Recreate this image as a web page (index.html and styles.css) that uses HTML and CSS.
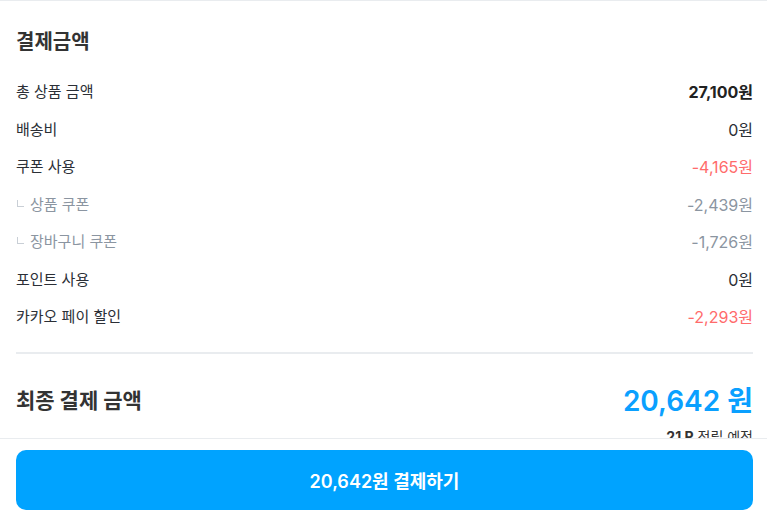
FILE: index.html
```html
<!DOCTYPE html>
<html lang="ko">
<head>
<meta charset="utf-8">
<title>결제금액</title>
<link rel="stylesheet" href="styles.css">
</head>
<body>
<main class="payment">
  <h2 class="payment-title">결제금액</h2>
  <ul class="rows">
    <li class="row"><span>총 상품 금액</span><strong class="amount">27,100원</strong></li>
    <li class="row"><span>배송비</span><span class="amount">0원</span></li>
    <li class="row"><span>쿠폰 사용</span><span class="amount discount">-4,165원</span></li>
    <li class="row sub"><span><i class="branch"></i>상품 쿠폰</span><span class="amount">-2,439원</span></li>
    <li class="row sub"><span><i class="branch"></i>장바구니 쿠폰</span><span class="amount">-1,726원</span></li>
    <li class="row"><span>포인트 사용</span><span class="amount">0원</span></li>
    <li class="row"><span>카카오 페이 할인</span><span class="amount discount">-2,293원</span></li>
  </ul>
  <hr class="divider">
  <div class="total">
    <span class="total-label">최종 결제 금액</span>
    <span class="total-value">20,642 원</span>
  </div>
  <p class="points"><b>21 P</b> 적립 예정</p>
</main>
<footer class="checkout">
  <button class="pay-button" type="button">20,642원 결제하기</button>
</footer>
</body>
</html>
```
FILE: styles.css
```css
* { box-sizing: border-box; }

html, body {
  margin: 0;
  height: 516px;
  overflow: hidden;
  background: #fff;
}

body {
  font-family: Inter, "Noto Sans CJK KR", sans-serif;
  color: #333d4b;
}

.payment {
  border-top: 1px solid #e9ecef;
  padding: 27px 14px 0 16px;
}

.payment-title {
  margin: 0;
  font-size: 20px;
  line-height: 28px;
  font-weight: 700;
  color: #333;
}

.rows {
  list-style: none;
  margin: 25px 0 0;
  padding: 0;
  display: flex;
  flex-direction: column;
  gap: 15.5px;
}

.row {
  display: flex;
  justify-content: space-between;
  align-items: center;
  font-size: 15px;
  line-height: 22px;
  color: #2b2f36;
}

.amount { font-size: 16px; }

.row strong { font-weight: 700; color: #222; }

.discount { color: #ff6b6b; }

.row.sub { color: #8b95a1; }

.branch {
  display: inline-block;
  width: 7px;
  height: 7px;
  border-left: 1px solid #c9cfd6;
  border-bottom: 1px solid #c9cfd6;
  margin: 0 6px 0 1px;
  vertical-align: 3px;
}

.divider {
  margin: 24px 0 0;
  border: 0;
  border-top: 2px solid #e9ecef;
}

.total {
  display: flex;
  justify-content: space-between;
  align-items: center;
  margin-top: 21px;
  height: 48px;
}

.total-label {
  font-size: 21px;
  font-weight: 700;
  color: #333;
}

.total-value {
  font-size: 28px;
  font-weight: 600;
  color: #0aa0ff;
}

.points {
  margin: 4px 0 0;
  text-align: right;
  font-size: 14px;
  line-height: 20px;
  color: #333;
}

.checkout {
  position: fixed;
  left: 0;
  right: 0;
  bottom: 0;
  height: 78px;
  background: #fff;
  border-top: 1px solid #e9ecef;
  padding: 11px 14px 0 16px;
}

.pay-button {
  display: block;
  width: 100%;
  height: 60px;
  border: 0;
  border-radius: 10px;
  background: #00a3ff;
  color: #fff;
  font-family: inherit;
  font-size: 18px;
  font-weight: 600;
}
```
